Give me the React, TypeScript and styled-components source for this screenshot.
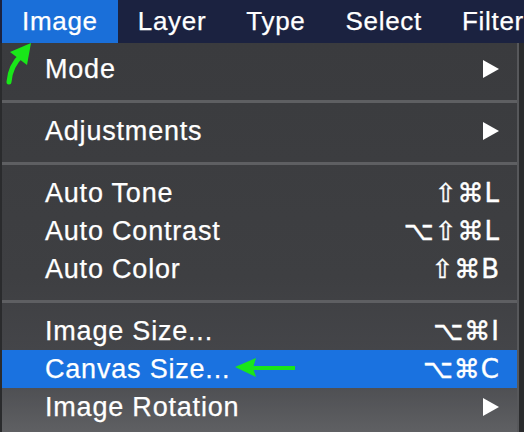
import React from "react";
import styled, { createGlobalStyle } from "styled-components";

const GlobalStyle = createGlobalStyle`
  html, body { margin: 0; padding: 0; background: #2a2b2d; }
  body { font-family: "Liberation Sans", Arial, sans-serif; color: #f7f7f7; }
`;

const Page = styled.div`
  position: relative;
  width: 524px;
  height: 432px;
  overflow: hidden;
  background: #2a2b2d;
`;

const MenuBar = styled.div`
  display: flex;
  height: 43px;
  padding-left: 2px;
  background: #1b2240;
`;

const BarItem = styled.div<{ $active?: boolean }>`
  display: flex;
  align-items: center;
  padding: 0 20px;
  font-size: 26px;
  letter-spacing: 0.7px;
  -webkit-text-stroke: 0.25px #ffffff;
  color: #ffffff;
  white-space: nowrap;
  background: ${(p) => (p.$active ? "#1a6fd9" : "transparent")};
`;

const Menu = styled.div`
  margin-left: 2px;
  width: 517px;
  height: 389px;
  padding-top: 7px;
  box-sizing: border-box;
  border-right: 2px solid #57585b;
  background: linear-gradient(
    180deg,
    #3a3b3e 0%,
    #3e3f42 60%,
    #45464a 82%,
    #5f6063 100%
  );
`;

const Row = styled.div<{ $highlight?: boolean }>`
  display: flex;
  align-items: center;
  justify-content: space-between;
  height: 38px;
  padding: 0 17px 0 43px;
  font-size: 27px;
  letter-spacing: 0.8px;
  -webkit-text-stroke: 0.25px #ffffff;
  color: #ffffff;
  background: ${(p) => (p.$highlight ? "#1a72e0" : "transparent")};
`;

const Separator = styled.div`
  height: 24px;
  padding-top: 12px;
  box-sizing: border-box;
  &::before {
    content: "";
    display: block;
    height: 3px;
    background: #5e5f62;
  }
`;

const Shortcut = styled.span`
  font-family: "DejaVu Sans", sans-serif;
  font-size: 26px;
  letter-spacing: 1px;
  -webkit-text-stroke: 0.4px #ffffff;
  color: #ffffff;
`;

const Overlay = styled.svg`
  position: absolute;
  left: 0;
  top: 0;
  pointer-events: none;
`;

const SubArrow = () => (
  <svg width="18" height="18" viewBox="0 0 18 18">
    <polygon points="1,0 17,9 1,18" fill="#ffffff" />
  </svg>
);

type Item =
  | { kind: "sep" }
  | { kind: "item"; label: string; sub?: boolean; keys?: string; hl?: boolean };

const items: Item[] = [
  { kind: "item", label: "Mode", sub: true },
  { kind: "sep" },
  { kind: "item", label: "Adjustments", sub: true },
  { kind: "sep" },
  { kind: "item", label: "Auto Tone", keys: "⇧⌘L" },
  { kind: "item", label: "Auto Contrast", keys: "⌥⇧⌘L" },
  { kind: "item", label: "Auto Color", keys: "⇧⌘B" },
  { kind: "sep" },
  { kind: "item", label: "Image Size...", keys: "⌥⌘I" },
  { kind: "item", label: "Canvas Size...", keys: "⌥⌘C", hl: true },
  { kind: "item", label: "Image Rotation", sub: true },
];

export default function App() {
  return (
    <Page>
      <GlobalStyle />
      <MenuBar>
        <BarItem $active>Image</BarItem>
        <BarItem>Layer</BarItem>
        <BarItem>Type</BarItem>
        <BarItem>Select</BarItem>
        <BarItem>Filter</BarItem>
      </MenuBar>
      <Menu>
        {items.map((it, i) =>
          it.kind === "sep" ? (
            <Separator key={i} />
          ) : (
            <Row key={i} $highlight={it.hl}>
              <span>{it.label}</span>
              {it.sub ? <SubArrow /> : it.keys ? <Shortcut>{it.keys}</Shortcut> : null}
            </Row>
          )
        )}
      </Menu>
      <Overlay width="524" height="432" viewBox="0 0 524 432">
        <path
          d="M9 82 C 10 70, 14 62, 22 55"
          stroke="#19e619"
          strokeWidth="5"
          fill="none"
          strokeLinecap="round"
        />
        <polygon points="31,43 10,52 27,65" fill="#19e619" />
        <line x1="252" y1="368" x2="295" y2="368" stroke="#19e619" strokeWidth="4" />
        <polygon points="235,367 256,358 253,368 256,377" fill="#19e619" />
      </Overlay>
    </Page>
  );
}
